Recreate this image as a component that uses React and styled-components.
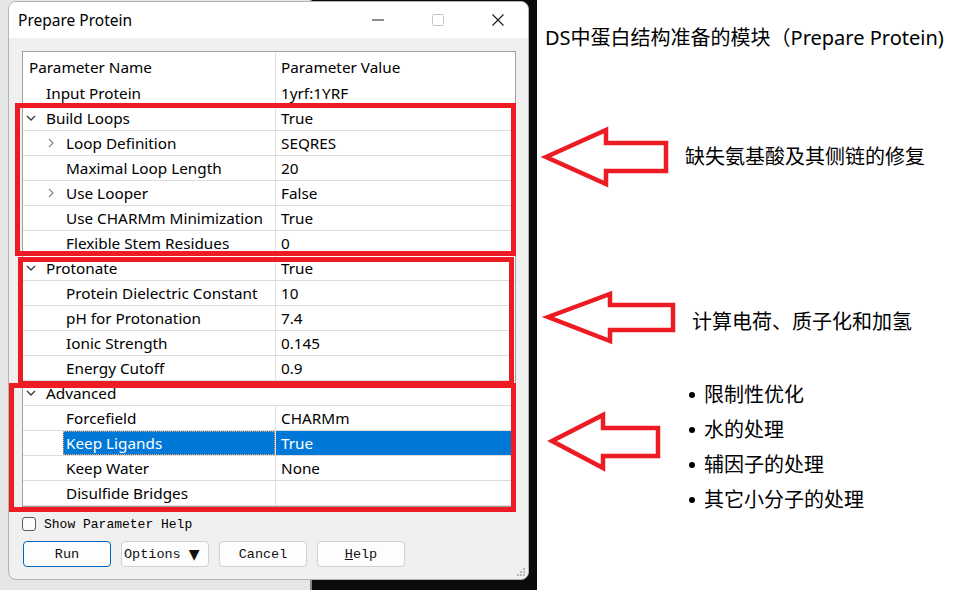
import React from 'react';
import styled, { createGlobalStyle } from 'styled-components';

const GlobalStyle = createGlobalStyle`
  html, body {
    margin: 0;
    padding: 0;
    background: #fff;
  }
  body {
    font-family: "Noto Sans", "Noto Sans CJK SC", sans-serif;
    color: #000;
  }
`;

const Page = styled.div`
  display: flex;
  width: 964px;
  height: 590px;
  overflow: hidden;
  background: #fff;
`;

const Backdrop = styled.div`
  position: relative;
  flex: 0 0 537px;
  box-sizing: border-box;
  padding: 1px 0 0 8px;
  background: linear-gradient(90deg, #e6e6e6 0 310px, #7b8594 310px 312px, #0b0b0b 312px);
`;

const Dialog = styled.div`
  position: relative;
  width: 521px;
  height: 579px;
  box-sizing: border-box;
  border: 1px solid #b4b4b4;
  border-radius: 8px;
  background: #f0f0f0;
  display: flex;
  flex-direction: column;
  overflow: hidden;
`;

const TitleBar = styled.div`
  flex: none;
  display: flex;
  align-items: center;
  height: 36px;
  background: #fff;
`;

const Title = styled.div`
  flex: 1;
  padding-left: 9px;
  font-size: 15.5px;
`;

const CaptionButton = styled.div`
  width: 60px;
  height: 36px;
  display: flex;
  align-items: center;
  justify-content: center;
`;

const Body = styled.div`
  flex: 1;
  padding: 13px 12px 0 13px;
`;

const Grid = styled.div`
  border: 1px solid #a0a0a0;
  background: #fff;
  font-size: 15.3px;
`;

const Row = styled.div`
  display: flex;
  box-sizing: border-box;
  height: ${p => (p.$header ? 29 : 25)}px;
  border-bottom: ${p => (p.$header ? 'none' : '1px solid #dcdcdc')};
`;

const NameCell = styled.div`
  flex: 0 0 252px;
  display: flex;
  align-items: center;
  box-sizing: border-box;
  padding-left: ${p => (p.$header ? 6 : 3 + p.$level * 20)}px;
`;

const Expander = styled.span`
  flex: 0 0 20px;
  display: flex;
  align-items: center;
`;

const Label = styled.span`
  flex: 1;
  align-self: stretch;
  display: flex;
  align-items: center;
  margin-left: -3px;
  padding-left: 3px;
  white-space: nowrap;
  background: ${p => (p.$selected ? '#0078d7' : 'transparent')};
  color: ${p => (p.$selected ? '#fff' : '#000')};
  outline: ${p => (p.$selected ? '1px dotted #f3a35c' : 'none')};
  outline-offset: -1px;
`;

const ValueCell = styled.div`
  flex: 1;
  display: flex;
  align-items: center;
  padding-left: 5px;
  border-left: 1px solid ${p => (p.$plain ? 'transparent' : '#e0e0e0')};
  background: ${p => (p.$selected ? '#0078d7' : 'transparent')};
  color: ${p => (p.$selected ? '#fff' : '#000')};
`;

const CheckRow = styled.div`
  display: flex;
  align-items: center;
  gap: 8px;
  height: 14px;
  margin-top: 10px;
  font-family: "Liberation Mono", monospace;
  font-size: 13px;
`;

const CheckBox = styled.span`
  width: 12px;
  height: 12px;
  border: 1px solid #5a5a5a;
  border-radius: 3px;
  background: #fbfbfb;
`;

const ButtonRow = styled.div`
  display: flex;
  gap: 10px;
  margin-top: 10px;
  padding-left: 1px;
`;

const Button = styled.div`
  width: 88px;
  height: 26px;
  box-sizing: border-box;
  display: flex;
  align-items: center;
  justify-content: ${p => (p.$left ? 'flex-start' : 'center')};
  padding-left: ${p => (p.$left ? 2 : 0)}px;
  gap: 8px;
  border: 1px solid ${p => (p.$primary ? '#0067c0' : '#d0d0d0')};
  border-radius: 4px;
  background: #fdfdfd;
  font-family: "Liberation Mono", monospace;
  font-size: 13.5px;
  color: #111;
  u { text-decoration: underline; }
`;

const Triangle = styled.span`
  font-family: "DejaVu Sans", sans-serif;
  font-size: 14px;
`;

const Grip = styled.svg`
  position: absolute;
  right: 2px;
  bottom: 2px;
`;

const Frame = styled.div`
  position: absolute;
  left: ${p => p.$x}px;
  top: ${p => p.$y}px;
  width: ${p => p.$w}px;
  height: ${p => p.$h}px;
  box-sizing: border-box;
  border: 5px solid #ed1c24;
  pointer-events: none;
`;

const Notes = styled.div`
  flex: 1;
  background: #fff;
  display: flex;
  flex-direction: column;
  font-family: "Noto Sans", "Noto Sans CJK SC", sans-serif;
  color: #000;
`;

const Heading = styled.div`
  margin: 26px 0 0 8px;
  font-size: 20px;
  line-height: 24px;
  white-space: nowrap;
`;

const NoteRow = styled.div`
  display: flex;
  align-items: flex-start;
  flex: none;
  height: ${p => p.$h}px;
  margin-top: ${p => p.$gap}px;
  margin-left: ${p => p.$indent}px;
`;

const Arrow = styled.svg`
  flex: none;
  overflow: visible;
  margin-top: ${p => p.$top || 0}px;
`;

const NoteText = styled.div`
  margin: ${p => p.$top}px 0 0 ${p => p.$left}px;
  font-size: 20px;
  line-height: 24px;
  white-space: nowrap;
`;

const Bullets = styled.ul`
  list-style: none;
  margin: 0 0 0 ${p => p.$left}px;
  padding: 0;
  font-size: 20px;
  line-height: 35px;
  white-space: nowrap;
`;

const Bullet = styled.li`
  display: flex;
  align-items: center;
  gap: 9px;
  &::before {
    content: "";
    width: 6px;
    height: 6px;
    margin-left: 1px;
    border-radius: 50%;
    background: #000;
  }
`;

const rows = [
  { name: 'Input Protein', value: '1yrf:1YRF', level: 0 },
  { name: 'Build Loops', value: 'True', level: 0, expander: 'down' },
  { name: 'Loop Definition', value: 'SEQRES', level: 1, expander: 'right' },
  { name: 'Maximal Loop Length', value: '20', level: 1 },
  { name: 'Use Looper', value: 'False', level: 1, expander: 'right' },
  { name: 'Use CHARMm Minimization', value: 'True', level: 1 },
  { name: 'Flexible Stem Residues', value: '0', level: 1 },
  { name: 'Protonate', value: 'True', level: 0, expander: 'down' },
  { name: 'Protein Dielectric Constant', value: '10', level: 1 },
  { name: 'pH for Protonation', value: '7.4', level: 1 },
  { name: 'Ionic Strength', value: '0.145', level: 1 },
  { name: 'Energy Cutoff', value: '0.9', level: 1 },
  { name: 'Advanced', value: '', level: 0, expander: 'down', plain: true },
  { name: 'Forcefield', value: 'CHARMm', level: 1 },
  { name: 'Keep Ligands', value: 'True', level: 1, selected: true },
  { name: 'Keep Water', value: 'None', level: 1 },
  { name: 'Disulfide Bridges', value: '', level: 1 },
];

const Chevron = ({ dir }) => (
  <svg width="10" height="10" viewBox="0 0 10 10">
    {dir === 'down'
      ? <polyline points="1,3 5,7 9,3" fill="none" stroke="#3a3a3a" strokeWidth="1.3" />
      : <polyline points="3,1 7,5 3,9" fill="none" stroke="#8a8a8a" strokeWidth="1.3" />}
  </svg>
);

const ArrowShape = ({ w, h, points, top }) => (
  <Arrow width={w} height={h} $top={top}>
    <polygon points={points} fill="none" stroke="#ed1c24" strokeWidth="4.5" strokeLinejoin="miter" />
  </Arrow>
);

export default function App() {
  return (
    <Page>
      <GlobalStyle />
      <Backdrop>
        <Dialog>
          <TitleBar>
            <Title>Prepare Protein</Title>
            <CaptionButton>
              <svg width="12" height="2"><rect width="12" height="1" y="0.5" fill="#1a1a1a" /></svg>
            </CaptionButton>
            <CaptionButton>
              <svg width="12" height="12"><rect x="0.5" y="0.5" width="11" height="11" rx="1" fill="none" stroke="#c4c4c4" /></svg>
            </CaptionButton>
            <CaptionButton>
              <svg width="12" height="12"><path d="M0.5 0.5 L11.5 11.5 M11.5 0.5 L0.5 11.5" stroke="#1a1a1a" strokeWidth="1.1" /></svg>
            </CaptionButton>
          </TitleBar>
          <Body>
            <Grid>
              <Row $header>
                <NameCell $header>Parameter Name</NameCell>
                <ValueCell>Parameter Value</ValueCell>
              </Row>
              {rows.map(r => (
                <Row key={r.name}>
                  <NameCell $level={r.level}>
                    <Expander>{r.expander && <Chevron dir={r.expander} />}</Expander>
                    <Label $selected={r.selected}>{r.name}</Label>
                  </NameCell>
                  <ValueCell $selected={r.selected} $plain={r.plain}>{r.value}</ValueCell>
                </Row>
              ))}
            </Grid>
            <CheckRow>
              <CheckBox />
              <span>Show Parameter Help</span>
            </CheckRow>
            <ButtonRow>
              <Button $primary>Run</Button>
              <Button $left>Options <Triangle>▼</Triangle></Button>
              <Button>Cancel</Button>
              <Button><span><u>H</u>elp</span></Button>
            </ButtonRow>
          </Body>
          <Grip width="12" height="10" viewBox="0 0 12 10">
            {[[9, 0], [6, 3], [9, 3], [3, 6], [6, 6], [9, 6]].map(([x, y]) => (
              <rect key={`${x}-${y}`} x={x} y={y + 1} width="2" height="2" fill="#b8b8b8" />
            ))}
          </Grip>
        </Dialog>
        <Frame $x={15} $y={103} $w={501} $h={153} />
        <Frame $x={18} $y={257} $w={496} $h={129} />
        <Frame $x={9} $y={383} $w={507} $h={129} />
      </Backdrop>
      <Notes>
        <Heading>DS中蛋白结构准备的模块（Prepare Protein)</Heading>
        <NoteRow $gap={77} $h={60} $indent={6}>
          <ArrowShape w={126} h={60} points="3,30 63,3 63,16 123,16 123,44 63,44 63,57" />
          <NoteText $top={18} $left={16}>缺失氨基酸及其侧链的修复</NoteText>
        </NoteRow>
        <NoteRow $gap={104} $h={53} $indent={8}>
          <ArrowShape w={131} h={53} points="3,26 65,3 65,14 128,14 128,39 65,39 65,50" />
          <NoteText $top={19} $left={16}>计算电荷、质子化和加氢</NoteText>
        </NoteRow>
        <NoteRow $gap={33} $h={140} $indent={12}>
          <ArrowShape w={112} h={59} top={35} points="3,29 54,3 54,16 109,16 109,44 54,44 54,56" />
          <Bullets $left={27}>
            <Bullet>限制性优化</Bullet>
            <Bullet>水的处理</Bullet>
            <Bullet>辅因子的处理</Bullet>
            <Bullet>其它小分子的处理</Bullet>
          </Bullets>
        </NoteRow>
      </Notes>
    </Page>
  );
}
